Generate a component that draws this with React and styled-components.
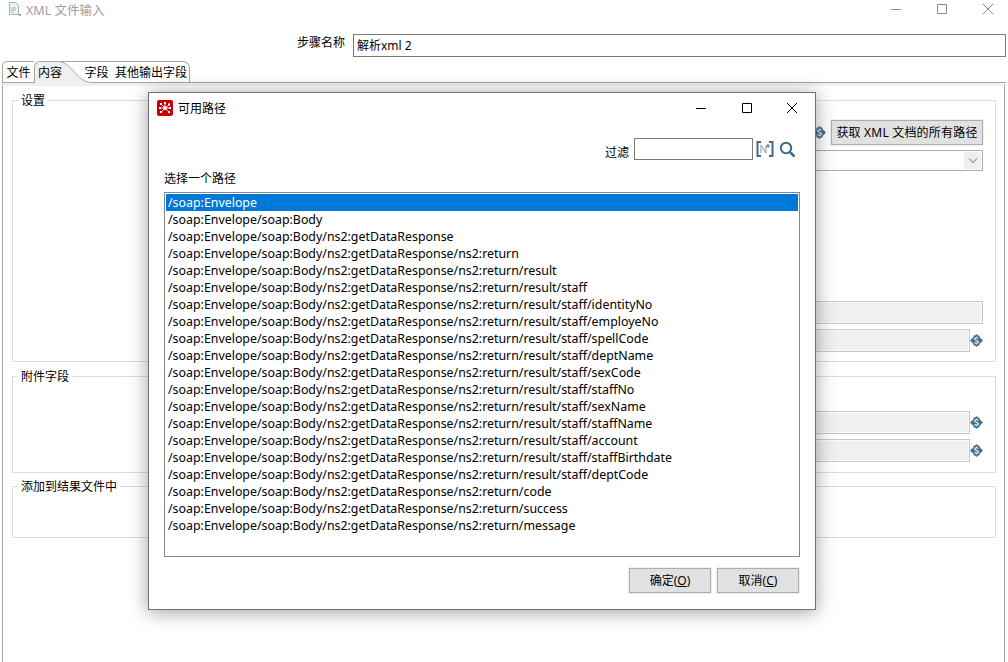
import React from 'react';
import styled, { createGlobalStyle } from 'styled-components';

const PATHS = [
	'/soap:Envelope',
	'/soap:Envelope/soap:Body',
	'/soap:Envelope/soap:Body/ns2:getDataResponse',
	'/soap:Envelope/soap:Body/ns2:getDataResponse/ns2:return',
	'/soap:Envelope/soap:Body/ns2:getDataResponse/ns2:return/result',
	'/soap:Envelope/soap:Body/ns2:getDataResponse/ns2:return/result/staff',
	'/soap:Envelope/soap:Body/ns2:getDataResponse/ns2:return/result/staff/identityNo',
	'/soap:Envelope/soap:Body/ns2:getDataResponse/ns2:return/result/staff/employeNo',
	'/soap:Envelope/soap:Body/ns2:getDataResponse/ns2:return/result/staff/spellCode',
	'/soap:Envelope/soap:Body/ns2:getDataResponse/ns2:return/result/staff/deptName',
	'/soap:Envelope/soap:Body/ns2:getDataResponse/ns2:return/result/staff/sexCode',
	'/soap:Envelope/soap:Body/ns2:getDataResponse/ns2:return/result/staff/staffNo',
	'/soap:Envelope/soap:Body/ns2:getDataResponse/ns2:return/result/staff/sexName',
	'/soap:Envelope/soap:Body/ns2:getDataResponse/ns2:return/result/staff/staffName',
	'/soap:Envelope/soap:Body/ns2:getDataResponse/ns2:return/result/staff/account',
	'/soap:Envelope/soap:Body/ns2:getDataResponse/ns2:return/result/staff/staffBirthdate',
	'/soap:Envelope/soap:Body/ns2:getDataResponse/ns2:return/result/staff/deptCode',
	'/soap:Envelope/soap:Body/ns2:getDataResponse/ns2:return/code',
	'/soap:Envelope/soap:Body/ns2:getDataResponse/ns2:return/success',
	'/soap:Envelope/soap:Body/ns2:getDataResponse/ns2:return/message'
];

const Minimize = ({ color }) => (
	<svg width="12" height="12" viewBox="0 0 12 12"><path d="M1 6.5h10" stroke={ color } fill="none" /></svg>
);

const Maximize = ({ color }) => (
	<svg width="12" height="12" viewBox="0 0 12 12"><path d="M1.5 1.5h9v9h-9z" stroke={ color } fill="none" /></svg>
);

const Close = ({ color }) => (
	<svg width="12" height="12" viewBox="0 0 12 12"><path d="M1 1l10 10M11 1L1 11" stroke={ color } fill="none" /></svg>
);

const DollarIcon = () => (
	<svg width="13" height="13" viewBox="0 0 13 13">
		<path d="M6.500 0L8 1.500h1.500v1.500L13 6.500 9.500 10v1.500H8L6.500 13 5 11.500H3.500V10L0 6.500 3.500 3V1.500H5z" fill="#456f8f" />
		<path d="M8.300 4.500C7.600 3.500 4.600 3.500 4.600 5.100c0 1.600 3.800 1.100 3.800 2.800 0 1.600-3.200 1.500-3.900.5" stroke="#fff" strokeWidth="1.100" fill="none" />
		<path d="M6.500 2.500v1M6.500 9.500v1" stroke="#d5e0e8" fill="none" />
	</svg>
);

const FileIcon = () => (
	<svg width="16" height="16" viewBox="0 0 16 16">
		<path d="M3.500 1.500h6l3 3v9h-9z" fill="#eef3ee" stroke="#9fb5a8" />
		<path d="M5 7h5M5 9h5M5 11h3" stroke="#9ab7c4" />
		<path d="M13 13h2v2h-2z" fill="#8fa6b5" />
	</svg>
);

const SpoonIcon = () => (
	<svg width="16" height="16" viewBox="0 0 16 16">
		<rect width="16" height="16" rx="2" fill="#c80000" />
		<path d="M4 4l8 8M12 5L4 12M3 8h4M8 3v4M9 8h4" stroke="#fff" strokeWidth=".8" fill="none" />
		<circle cx="8" cy="8" r="1.900" fill="#fff" />
		<path d="M3 3h2v2H3zM11 3.500h2v2h-2zM11 11h2v2h-2zM3 11h2v2H3zM7 2h2v2H7zM2 7h2v2H2zM12 7h2v2h-2z" fill="#fff" />
	</svg>
);

const RegexIcon = () => (
	<svg width="18" height="18" viewBox="0 0 18 18">
		<path d="M5 2H1.500v14H5M13 2h3.500v14H13" stroke="#3f6b8c" strokeWidth="2" fill="none" />
		<path d="M5 13V5l5 8V5" stroke="#8797a3" fill="none" />
		<path d="M12 4v4M10.500 5l3 2M13.500 5l-3 2" stroke="#5f7b8e" fill="none" />
	</svg>
);

const SearchIcon = () => (
	<SearchSvg width="17" height="17" viewBox="0 0 17 17">
		<circle cx="7" cy="7" r="5.200" stroke="#3f6b8c" strokeWidth="2" fill="none" />
		<path d="M10.800 10.800L15.500 15.500" stroke="#3f6b8c" strokeWidth="2.600" fill="none" />
	</SearchSvg>
);

const TabCurve = () => (
	<CurveSvg width="53" height="22" viewBox="0 0 53 22">
		<path d="M0 0C14 0 18 21 33 21.500V22H0z" fill="#f0f0f0" />
		<path d="M0 .5C14 .5 18 21 33 21.500H53" stroke="#a6a6a6" fill="none" />
	</CurveSvg>
);

const App = () => {
	return (
		<Root>
			<GlobalStyle />

			<TitleBar>
				<FileIcon />
				<TitleText>XML 文件输入</TitleText>
				<WindowControls>
					<Minimize color="#8a8a8a" />
					<Maximize color="#8a8a8a" />
					<Close color="#8a8a8a" />
				</WindowControls>
			</TitleBar>

			<StepRow>
				<StepLabel>步骤名称</StepLabel>
				<StepInput>解析xml 2</StepInput>
			</StepRow>

			<TabStrip>
				<Tab $first $width={ 32 }>文件</Tab>
				<ActiveTab><TabCurve /><ActiveLabel>内容</ActiveLabel></ActiveTab>
				<Tab $open $width={ 27 }>字段</Tab>
				<Tab $last $width={ 80 }>其他输出字段</Tab>
				<TabFill />
			</TabStrip>

			<Panel>
				<Group $height={ 262 }>
					<Legend>设置</Legend>
					<ButtonRow>
						<DollarIcon />
						<GetButton>获取 XML 文档的所有路径</GetButton>
					</ButtonRow>
					<ComboBox>
						<ComboArrow>
							<svg width="10" height="6" viewBox="0 0 10 6"><path d="M1 .5l4 4 4-4" stroke="#a9a9a9" strokeWidth="1.500" fill="none" /></svg>
						</ComboArrow>
					</ComboBox>
					<FieldStack $top={ 130 }>
						<Field><FieldInput /></Field>
						<Field><FieldInput /><DollarIcon /></Field>
					</FieldStack>
				</Group>
				<Group $height={ 97 } $gap={ 14 }>
					<Legend>附件字段</Legend>
					<FieldStack $top={ 34 }>
						<Field><FieldInput /><DollarIcon /></Field>
						<Field><FieldInput /><DollarIcon /></Field>
					</FieldStack>
				</Group>
				<Group $height={ 52 } $gap={ 13 }>
					<Legend>添加到结果文件中</Legend>
				</Group>
			</Panel>

			<Dialog>
				<DialogTitle>
					<SpoonIcon />
					<DialogTitleText>可用路径</DialogTitleText>
					<DialogControls>
						<Minimize color="#000" />
						<Maximize color="#000" />
						<Close color="#000" />
					</DialogControls>
				</DialogTitle>

				<FilterRow>
					<FilterLabel>过滤</FilterLabel>
					<FilterInput />
					<RegexIcon />
					<SearchIcon />
				</FilterRow>

				<ListLabel>选择一个路径</ListLabel>

				<PathList>
					{ PATHS.map((path, i) => (
						<PathRow key={ path } $selected={ i === 0 }>{ path }</PathRow>
					)) }
				</PathList>

				<DialogButtons>
					<DialogButton>确定(<u>O</u>)</DialogButton>
					<DialogButton>取消(<u>C</u>)</DialogButton>
				</DialogButtons>
			</Dialog>
		</Root>
	);
}

export default App;

const GlobalStyle = createGlobalStyle`
	html, body {
		margin: 0;
		padding: 0;
		background: #fff;
		overflow: hidden;
	}

	body {
		font-family: "Noto Sans", "Noto Sans CJK SC", sans-serif;
		font-size: 12px;
		color: #000;
	}
`;

const Root = styled.div`
	position: relative;
	width: 1008px;
	height: 662px;
	overflow: hidden;
	background: #fff;
`;

const TitleBar = styled.div`
	display: flex;
	align-items: center;
	height: 18px;
	padding: 0 9px 0 6px;
	gap: 4px;
`;

const TitleText = styled.span`
	font-size: 12.5px;
	color: #a0a0a0;
`;

const WindowControls = styled.div`
	display: flex;
	gap: 34px;
	margin-left: auto;
	padding-right: 5px;
`;

const StepRow = styled.div`
	display: flex;
	align-items: center;
	justify-content: flex-end;
	gap: 8px;
	margin-top: 16px;
	padding-right: 2px;
`;

const StepLabel = styled.span`
	line-height: 18px;
	padding-bottom: 5px;
`;

const StepInput = styled.div`
	box-sizing: border-box;
	width: 653px;
	height: 23px;
	padding-left: 3px;
	border: 1px solid #7a7a7a;
	line-height: 21px;
`;

const TabStrip = styled.div`
	display: flex;
	height: 22px;
	margin: 4px 0 0 2px;
	box-sizing: border-box;
`;

const Tab = styled.div`
	position: relative;
	z-index: 1;
	box-sizing: border-box;
	width: ${ ({ $width }) => $width }px;
	height: 22px;
	padding-left: ${ ({ $last }) => $last ? '3px' : '0' };
	text-align: center;
	line-height: 21px;
	border-top: 1px solid #a6a6a6;
	border-bottom: ${ ({ $open }) => $open ? '0' : '1px solid #a6a6a6' };
	border-right: ${ ({ $last }) => $last ? '1px solid #a6a6a6' : '0' };
	border-left: ${ ({ $first }) => $first ? '1px solid #a6a6a6' : '0' };
	border-radius: ${ ({ $first, $last }) => $first ? '5px 0 0 0' : $last ? '0 7px 0 0' : '0' };
`;

const ActiveTab = styled.div`
	position: relative;
	box-sizing: border-box;
	width: 49px;
	height: 22px;
	padding-left: 3px;
	line-height: 21px;
	background: linear-gradient(90deg, #f0f0f0 0, #f0f0f0 24px, transparent 24px);
	border-left: 1px solid #a6a6a6;
	border-top: 1px solid #a6a6a6;
	border-radius: 6px 0 0 0;
`;

const ActiveLabel = styled.span`
	position: relative;
`;

const CurveSvg = styled.svg`
	position: absolute;
	top: -1px;
	left: 23px;
`;

const TabFill = styled.div`
	flex: 1;
	margin-right: 2px;
	border-bottom: 1px solid #a6a6a6;
`;

const Panel = styled.div`
	box-sizing: border-box;
	height: 579px;
	margin: 0 3px 0 2px;
	padding: 14px 8px 0 9px;
	border-left: 1px solid #a6a6a6;
	border-right: 1px solid #a6a6a6;
	border-top: 3px solid #f0f0f0;
`;

const Group = styled.div`
	position: relative;
	box-sizing: border-box;
	height: ${ ({ $height }) => $height }px;
	margin-top: ${ ({ $gap }) => $gap || 0 }px;
	padding-right: 12px;
	border: 1px solid #dcdcdc;
`;

const Legend = styled.span`
	position: absolute;
	top: -8px;
	left: 5px;
	padding: 0 3px;
	background: #fff;
	line-height: 16px;
`;

const ButtonRow = styled.div`
	display: flex;
	align-items: center;
	justify-content: flex-end;
	gap: 5px;
	margin-top: 19px;
`;

const GetButton = styled.div`
	box-sizing: border-box;
	width: 152px;
	height: 25px;
	line-height: 23px;
	text-align: center;
	letter-spacing: 0.2px;
	white-space: nowrap;
	background: #e1e1e1;
	border: 1px solid #adadad;
	outline: 1px solid #f0f0f0;
`;

const ComboBox = styled.div`
	display: flex;
	align-items: center;
	justify-content: flex-end;
	box-sizing: border-box;
	height: 21px;
	margin: 5px 0 0 200px;
	padding-right: 1px;
	border: 1px solid #a9acb5;
`;

const ComboArrow = styled.div`
	display: flex;
	align-items: center;
	justify-content: center;
	width: 17px;
	height: 17px;
	background: #efefef;
`;

const FieldStack = styled.div`
	display: flex;
	flex-direction: column;
	gap: 5px;
	margin: ${ ({ $top }) => $top }px 0 0 200px;
`;

const Field = styled.div`
	display: flex;
	align-items: center;
	height: 23px;
`;

const FieldInput = styled.div`
	flex: 1;
	box-sizing: border-box;
	height: 23px;
	background: #f0f0f0;
	border: 1px solid #c8c8c8;
	box-shadow: inset 0 0 0 1px #fafafa;
`;

const Dialog = styled.div`
	position: absolute;
	z-index: 2;
	top: 92px;
	left: 148px;
	box-sizing: border-box;
	display: flex;
	flex-direction: column;
	width: 668px;
	height: 518px;
	background: #fff;
	border: 1px solid #707070;
	box-shadow: 0 2px 18px rgba(0, 0, 0, 0.38);
`;

const DialogTitle = styled.div`
	display: flex;
	align-items: center;
	gap: 5px;
	height: 29px;
	padding: 0 12px 0 8px;
`;

const DialogTitleText = styled.span`
	font-size: 12px;
`;

const DialogControls = styled.div`
	display: flex;
	gap: 33.5px;
	margin-left: auto;
	padding-right: 5px;
`;

const FilterRow = styled.div`
	display: flex;
	align-items: center;
	justify-content: flex-end;
	height: 22px;
	margin-top: 16px;
	padding-right: 19px;
`;

const FilterLabel = styled.span`
	margin-right: 5px;
	padding-top: 5px;
`;

const FilterInput = styled.div`
	box-sizing: border-box;
	width: 119px;
	height: 22px;
	margin-right: 3px;
	border: 1px solid #7a7a7a;
`;

const SearchSvg = styled.svg`
	margin-left: 5px;
`;

const ListLabel = styled.div`
	margin: 10px 0 0 15px;
	line-height: 18px;
`;

const PathList = styled.div`
	box-sizing: border-box;
	width: 636px;
	height: 365px;
	margin: 4px 0 0 15px;
	padding: 1px;
	border: 1px solid #828790;
`;

const PathRow = styled.div`
	height: 17px;
	padding-left: 2px;
	font-size: 12.38px;
	line-height: 17px;
	white-space: nowrap;
	color: ${ ({ $selected }) => $selected ? '#fff' : '#000' };
	background: ${ ({ $selected }) => $selected ? '#0078d7' : 'transparent' };
`;

const DialogButtons = styled.div`
	display: flex;
	justify-content: flex-end;
	gap: 6px;
	margin-top: 11px;
	padding-right: 16px;
`;

const DialogButton = styled.div`
	box-sizing: border-box;
	width: 82px;
	height: 25px;
	line-height: 24px;
	text-align: center;
	background: #e1e1e1;
	border: 1px solid #adadad;
	outline: 1px solid #f0f0f0;
`;
